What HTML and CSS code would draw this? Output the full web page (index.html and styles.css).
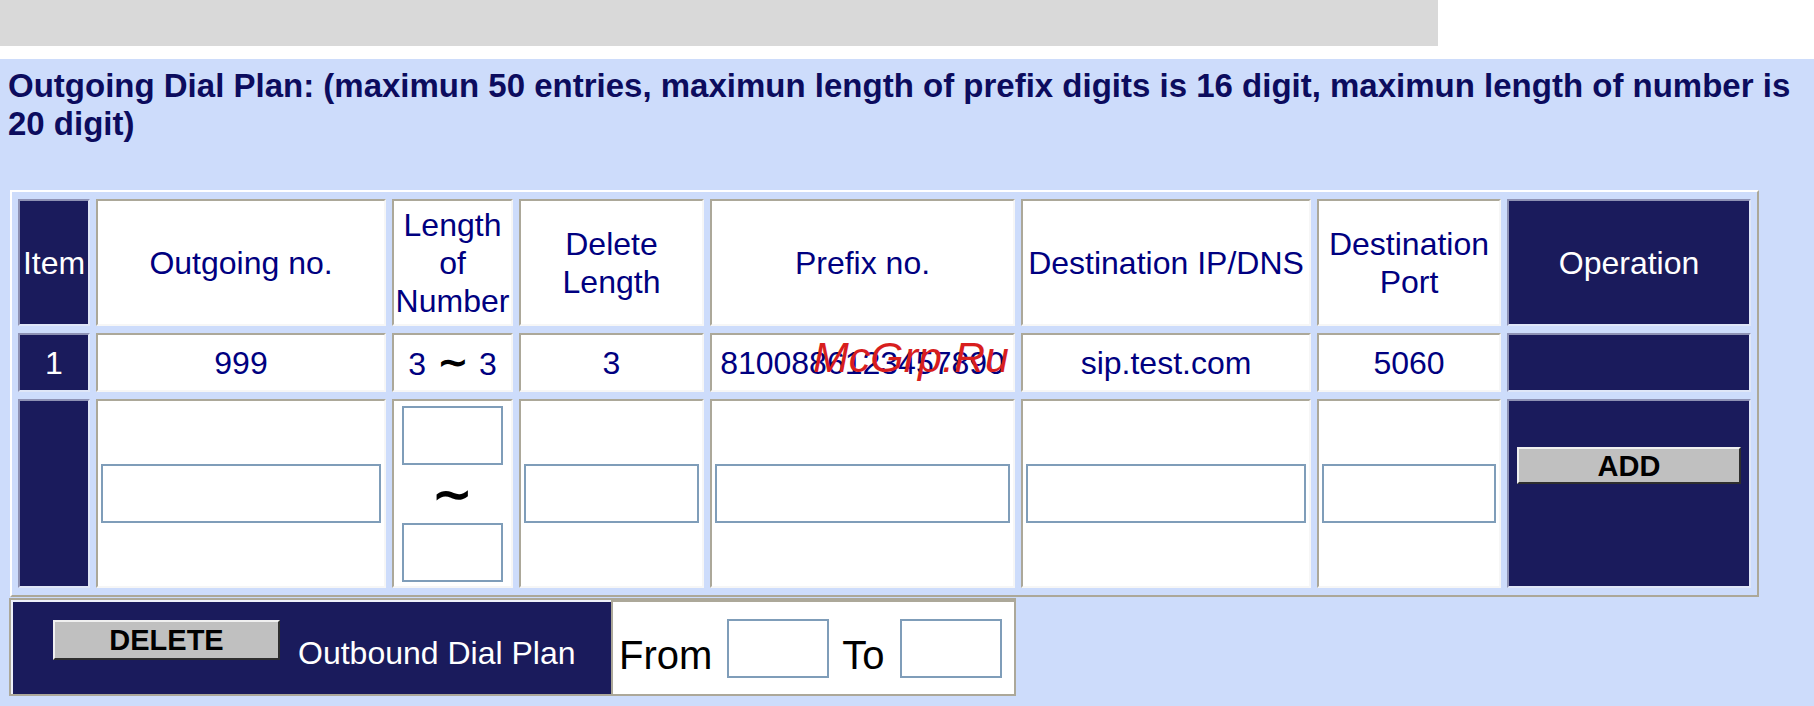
FILE: index.html
```html
<!DOCTYPE html>
<html>
<head>
<meta charset="utf-8">
<title>Outgoing Dial Plan</title>
<link rel="stylesheet" href="styles.css">
</head>
<body>
<div class="topbar"></div>
<div class="panel">
  <h1 class="title">Outgoing Dial Plan: (maximun 50 entries, maximun length of prefix digits is 16 digit, maximun length of number is 20 digit)</h1>
  <table class="plan">
    <tr class="head">
      <th class="c-item dark">Item</th>
      <th class="c-out">Outgoing no.</th>
      <th class="c-len">Length<br>of<br>Number</th>
      <th class="c-del">Delete<br>Length</th>
      <th class="c-pre">Prefix no.</th>
      <th class="c-ip">Destination IP/DNS</th>
      <th class="c-port">Destination<br>Port</th>
      <th class="c-op dark">Operation</th>
    </tr>
    <tr class="data">
      <td class="dark">1</td>
      <td>999</td>
      <td>3<span class="tilde">∼</span>3</td>
      <td>3</td>
      <td class="prefix">8100886123457890<span class="watermark">McGrp.Ru</span></td>
      <td>sip.test.com</td>
      <td>5060</td>
      <td class="dark"></td>
    </tr>
    <tr class="entry">
      <td class="dark"></td>
      <td><input class="field" type="text"></td>
      <td>
        <div class="range">
          <input class="field small" type="text">
          <span class="bigtilde">∼</span>
          <input class="field small" type="text">
        </div>
      </td>
      <td><input class="field" type="text"></td>
      <td><input class="field" type="text"></td>
      <td><input class="field" type="text"></td>
      <td><input class="field" type="text"></td>
      <td class="dark op-cell"><button class="btn add" type="button">ADD</button></td>
    </tr>
  </table>
  <div class="delbar">
    <div class="delcell">
      <button class="btn del" type="button">DELETE</button>
      <span class="deltext">Outbound Dial Plan</span>
    </div>
    <div class="rangecell">
      <span class="lbl">From</span>
      <input class="field box" type="text">
      <span class="lbl to">To</span>
      <input class="field box" type="text">
    </div>
  </div>
</div>
</body>
</html>
```
FILE: styles.css
```css
* {
  box-sizing: border-box;
}

body {
  margin: 0;
  background: #ffffff;
  font-family: "Liberation Sans", Arial, sans-serif;
}

.topbar {
  width: 1438px;
  height: 46px;
  background: #d9d9d9;
}

.panel {
  margin-top: 13px;
  height: 647px;
  padding-top: 8px;
  background: #cddcfb;
  overflow: hidden;
}

.title {
  margin: 0 0 47px;
  padding: 0 8px;
  font-size: 33px;
  line-height: 38px;
  font-weight: bold;
  color: #0c0c5e;
}

.plan {
  margin-left: 10px;
  width: 1749px;
  table-layout: fixed;
  border-spacing: 6px 7px;
  border: 2px solid;
  border-color: #ffffff #aca899 #aca899 #ffffff;
  font-size: 32px;
  line-height: 38px;
  color: #000080;
  text-align: center;
}

.plan th,
.plan td {
  padding: 0;
  border: 2px solid;
  border-color: #aca899 #f6f6f6 #f6f6f6 #aca899;
  background: #ffffff;
  font-weight: normal;
  vertical-align: middle;
  white-space: nowrap;
}

.plan .dark {
  background: #1a1b5c;
  color: #ffffff;
  border-color: #8e92b4 #dfe6f7 #dfe6f7 #8e92b4;
}

.c-item { width: 72px; }
.c-out { width: 290px; }
.c-len { width: 121px; }
.c-del { width: 185px; }
.c-pre { width: 305px; }
.c-ip { width: 290px; }
.c-port { width: 184px; }
.c-op { width: 244px; }

.head { height: 127px; }
.data { height: 59px; }
.entry { height: 189px; }

.tilde {
  margin: 0 10px 0 11px;
  font-family: "DejaVu Sans", sans-serif;
  font-weight: bold;
  font-size: 38px;
  line-height: 38px;
  color: #000000;
}

.prefix {
  position: relative;
}

.watermark {
  position: absolute;
  left: 101px;
  top: 2px;
  font-size: 43px;
  line-height: 40px;
  font-style: italic;
  color: #d81e1e;
}

.plan .entry td {
  padding: 0 3px;
}

.field {
  display: block;
  width: 100%;
  height: 59px;
  margin: 0;
  padding: 0;
  border: 2px solid #7f9db9;
  background: #ffffff;
}

.range {
  display: flex;
  flex-direction: column;
  align-items: center;
}

.range .small {
  width: 101px;
}

.bigtilde {
  height: 58px;
  display: flex;
  align-items: center;
  justify-content: center;
  font-family: "DejaVu Sans", sans-serif;
  font-weight: bold;
  font-size: 50px;
  line-height: 50px;
  color: #000000;
}

.plan .entry .op-cell {
  vertical-align: top;
  padding-top: 46px;
}

.btn {
  display: block;
  margin: 0;
  padding: 0;
  background: #c0c0c0;
  border: 2px solid;
  border-color: #f0f0f0 #2e2e2e #2e2e2e #f0f0f0;
  font-family: "Liberation Sans", Arial, sans-serif;
  font-weight: bold;
  font-size: 29px;
  line-height: 30px;
  color: #000000;
}

.add {
  width: 224px;
  height: 37px;
  margin: 0 auto;
}

.delbar {
  display: flex;
  width: max-content;
  margin: 1px 0 0 9px;
  border: 2px solid #aca899;
}

.delcell {
  width: 600px;
  height: 94px;
  display: flex;
  align-items: flex-start;
  padding: 18px 0 0 40px;
  background: #1a1b5c;
  border-top: 2px solid #eef0fa;
  border-left: 2px solid #eef0fa;
}

.del {
  width: 227px;
  height: 40px;
}

.deltext {
  margin: 14px 0 0 18px;
  font-size: 32px;
  line-height: 38px;
  color: #ffffff;
}

.rangecell {
  width: 403px;
  display: flex;
  align-items: center;
  padding-left: 6px;
  background: #ffffff;
  border-top: 2px solid #aca899;
  border-left: 2px solid #aca899;
}

.lbl {
  padding-top: 14px;
  font-size: 40px;
  line-height: 40px;
  color: #000000;
}

.lbl.to {
  margin-left: 13px;
}

.box {
  width: 102px;
  margin-left: 15px;
}
```
